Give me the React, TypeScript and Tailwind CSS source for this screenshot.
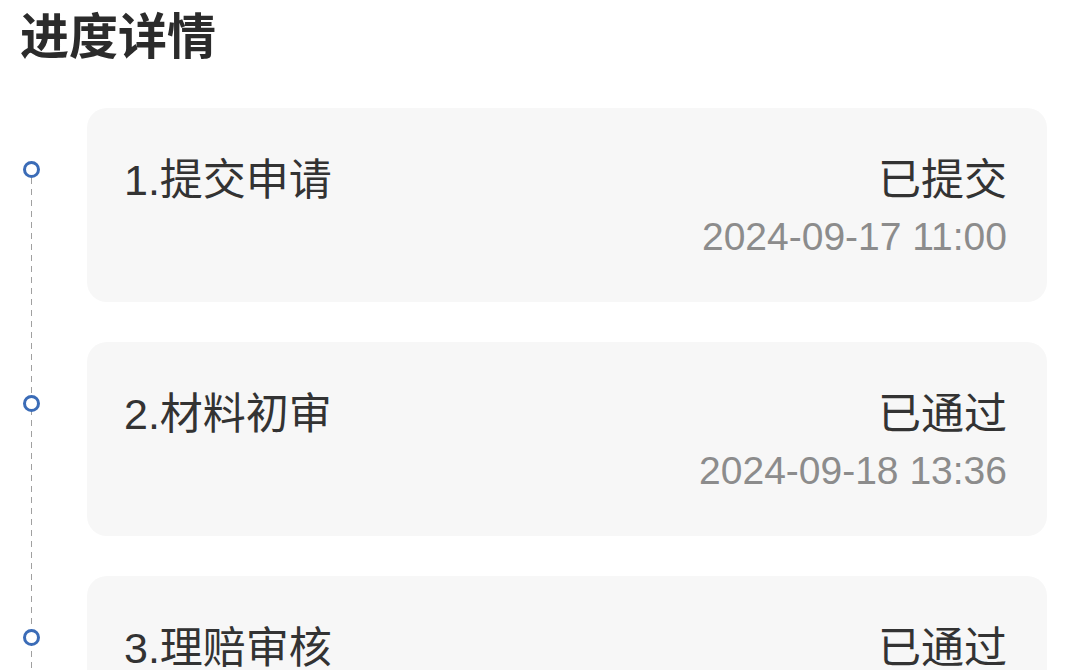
import React from "react";

const steps = [
  { title: "1.提交申请", status: "已提交", time: "2024-09-17 11:00" },
  { title: "2.材料初审", status: "已通过", time: "2024-09-18 13:36" },
  { title: "3.理赔审核", status: "已通过", time: "2024-09-19 10:12" },
];

export default function App() {
  return (
    <div
      className="w-[1067px] h-[670px] overflow-hidden bg-white text-[#333333]"
      style={{ fontFamily: '"Liberation Sans", "Noto Sans CJK SC", sans-serif' }}
    >
      <h1 className="pl-[20px] pt-[8px] text-[49px] leading-[58px] font-bold text-[#2b2b2b]">
        进度详情
      </h1>
      <div className="relative mt-[42px] flex flex-col gap-[40px] pr-[20px]">
        <div className="absolute left-[31px] top-[70px] bottom-[-400px] w-[1px] bg-[repeating-linear-gradient(to_bottom,#a0a0a0_0px,#a0a0a0_6px,transparent_6px,transparent_11px)]" />
        {steps.map((s) => (
          <div key={s.title} className="relative flex">
            <div className="relative w-[87px] shrink-0">
              <div className="absolute left-[23px] top-[53px] h-[17px] w-[17px] rounded-full border-[3px] border-[#3b6cb7] bg-white" />
            </div>
            <div className="flex flex-1 justify-between rounded-[20px] bg-[#f7f7f7] pl-[37px] pr-[40px] pt-[47px] pb-[42px]">
              <div className="text-[43px] leading-[50px] text-[#333333]">{s.title}</div>
              <div className="flex flex-col items-end">
                <div className="text-[43px] leading-[50px] text-[#333333]">{s.status}</div>
                <div className="mt-[9px] text-[39px] leading-[46px] text-[#8c8c8c]">{s.time}</div>
              </div>
            </div>
          </div>
        ))}
      </div>
    </div>
  );
}
